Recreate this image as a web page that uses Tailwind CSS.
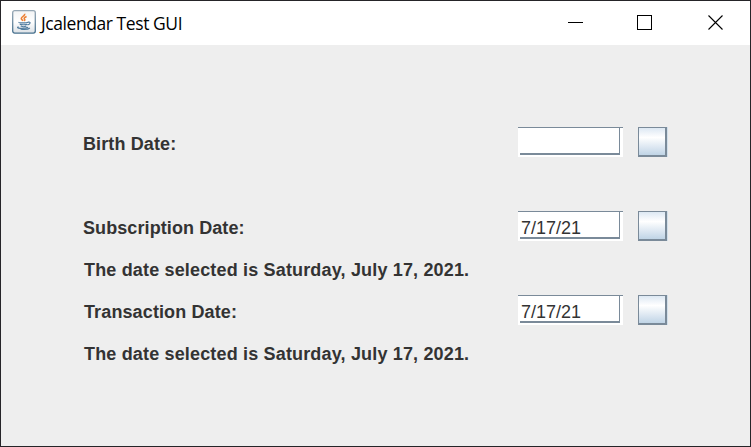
<!DOCTYPE html>
<html lang="en">
<head>
<meta charset="utf-8">
<title>Jcalendar Test GUI</title>
<script src="https://cdn.jsdelivr.net/npm/@tailwindcss/browser@4"></script>
</head>
<body>
<div class="flex h-[447px] w-[751px] flex-col overflow-hidden border border-[#252428] bg-[#eeeeee]">
  <header class="flex h-11 shrink-0 items-center bg-white pl-[11px] text-black">
    <svg class="-mt-0.5 h-6 w-6 shrink-0" viewBox="0 0 24 24" fill="none">
      <defs><linearGradient id="tile" x2="0" y2="1"><stop stop-color="#f3f4f5"/><stop offset=".5" stop-color="#fff"/><stop offset="1" stop-color="#dce1e6"/></linearGradient>
      <linearGradient id="edge" x2="0" y2="1"><stop stop-color="#96a7b4"/><stop offset="1" stop-color="#456f8d"/></linearGradient></defs>
      <rect x=".7" y=".7" width="22.6" height="22.4" rx="2" fill="url(#tile)" stroke="url(#edge)" stroke-width="1.3"/>
      <path d="M12.7 3.8C13.5 6 9.3 6.6 9.3 8.5c0 1.2 1.3 1.4 1.6 2.4M14.6 6.5c-3.3 1.3-2.5 2.2-1.9 3 .3.5 0 1.1-.6 1.4" stroke="#ec8136" stroke-width="1.6"/>
      <path d="M7 12.2c-.8 1 7.8.9 9.1 0M7.8 14.2c1.4.8 6.2.7 7.5 0M8.7 16c1.4.7 4.4.7 5.7 0M16 12.2c3-.7 2.7 2-.4 2.8M6.6 16.8c-4 1.6 5 2.2 9.5.6M8.6 19.2c3.6.5 7.9.2 9.2-1.2" stroke="#527c9e" stroke-width="1.2"/>
    </svg>
    <h1 class="-mt-px ml-[5px] whitespace-nowrap font-['Open_Sans',sans-serif] text-[17.5px] leading-6 tracking-[-0.43px]">Jcalendar Test GUI</h1>
    <svg class="ml-auto h-11 w-[210px] shrink-0" viewBox="0 0 210 44" fill="none" stroke="#000">
      <path d="M28 21.5h15M97.5 14.5h14v14h-14z" shape-rendering="crispEdges"/>
      <path d="M168.5 14.5l14 14M182.5 14.5l-14 14" stroke-width="1.1"/>
    </svg>
  </header>
  <main class="flex flex-col pt-[76px] pr-[82px] pl-[82px] font-['Liberation_Sans',Arial,sans-serif] text-[18px] leading-[42px] text-[#333333]">
    <div class="flex h-[42px] items-center">
      <span class="mt-[3px] font-bold tracking-[0.12px]">Birth Date:</span>
      <div class="ml-auto h-[30px] w-[105px] border-t border-[#7a8a99] bg-white"><div class="ml-0.5 h-[27px] w-[100px] border-r border-b-2 border-[#7a8a99]"></div></div>
      <div class="ml-[15px] h-[30px] w-[30px] border-r border-[#d2e0eb]"><div class="h-[30px] border-t border-r-2 border-b-2 border-l border-[#7a8a99] bg-linear-to-b from-[#dde8f3] via-white via-35% to-[#c0d4e6]"></div></div>
    </div>
    <div class="h-[42px]"></div>
    <div class="flex h-[42px] items-center">
      <span class="mt-[3px] font-bold tracking-[0.09px]">Subscription Date:</span>
      <div class="ml-auto h-[30px] w-[105px] border-t border-[#7a8a99] bg-white"><div class="ml-0.5 h-[27px] w-[100px] border-r border-b-2 border-[#7a8a99] pl-px leading-[33px]">7/17/21</div></div>
      <div class="ml-[15px] h-[30px] w-[30px] border-r border-[#d2e0eb]"><div class="h-[30px] border-t border-r-2 border-b-2 border-l border-[#7a8a99] bg-linear-to-b from-[#dde8f3] via-white via-35% to-[#c0d4e6]"></div></div>
    </div>
    <p class="h-[42px] pl-px leading-[46px] font-bold tracking-[0.165px]">The date selected is Saturday, July 17, 2021.</p>
    <div class="flex h-[42px] items-center">
      <span class="mt-[3px] pl-px font-bold tracking-[0.12px]">Transaction Date:</span>
      <div class="ml-auto h-[30px] w-[105px] border-t border-[#7a8a99] bg-white"><div class="ml-0.5 h-[27px] w-[100px] border-r border-b-2 border-[#7a8a99] pl-px leading-[33px]">7/17/21</div></div>
      <div class="ml-[15px] h-[30px] w-[30px] border-r border-[#d2e0eb]"><div class="h-[30px] border-t border-r-2 border-b-2 border-l border-[#7a8a99] bg-linear-to-b from-[#dde8f3] via-white via-35% to-[#c0d4e6]"></div></div>
    </div>
    <p class="h-[42px] pl-px leading-[46px] font-bold tracking-[0.165px]">The date selected is Saturday, July 17, 2021.</p>
  </main>
</div>
</body>
</html>
